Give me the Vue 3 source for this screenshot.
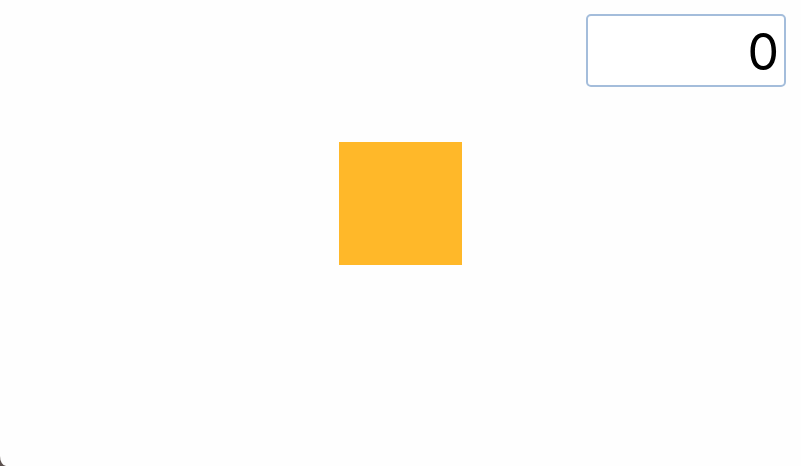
<script setup>
import { ref } from 'vue'

const score = ref('0')
</script>

<template>
  <main class="stage">
    <header class="bar">
      <input v-model="score" class="score" type="text" aria-label="Score" />
    </header>
    <section class="field">
      <button class="target" type="button" aria-label="Target"></button>
    </section>
  </main>
</template>

<style>
html {
  background: #5b504e;
}
</style>

<style scoped>
.stage {
  box-sizing: border-box;
  display: flex;
  flex-direction: column;
  gap: 55px;
  min-height: 100vh;
  padding: 14px 15px;
  background: #fefefe;
  border-bottom-left-radius: 6px 10px;
}

.bar {
  display: flex;
  justify-content: flex-end;
}

.score {
  box-sizing: border-box;
  width: 200px;
  height: 73px;
  margin: 0;
  padding: 4px 5px 2px;
  border: 2px solid #a4bddb;
  border-radius: 5px;
  background: #fff;
  color: #000;
  font-family: Inter, "Open Sans", sans-serif;
  font-size: 50px;
  text-align: right;
  outline: none;
}

.field {
  display: flex;
  justify-content: center;
}

.target {
  width: 123px;
  height: 123px;
  padding: 0;
  border: 0;
  background: #ffb829;
}
</style>
